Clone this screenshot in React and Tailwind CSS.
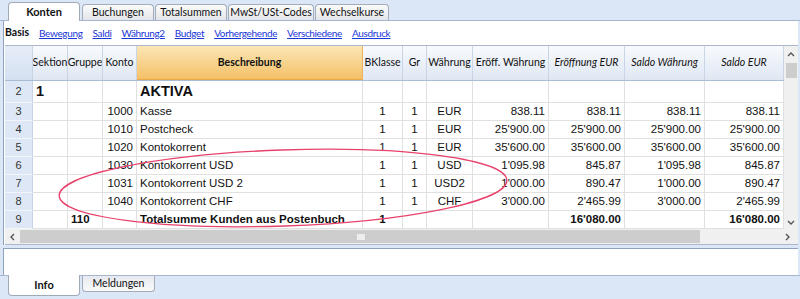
import React from "react";

const ui = { fontFamily: "Lato, 'Noto Sans', sans-serif" };
const data = { fontFamily: "'Liberation Sans', Arial, sans-serif" };

const cols = [
  { key: "sek", label: "Sektion", w: "w-[35px]", align: "left" },
  { key: "gru", label: "Gruppe", w: "w-[35px]", align: "left" },
  { key: "kon", label: "Konto", w: "w-[34px]", align: "right" },
  { key: "bes", label: "Beschreibung", w: "w-[226px]", align: "left" },
  { key: "bk", label: "BKlasse", w: "w-[40px]", align: "center" },
  { key: "gr", label: "Gr", w: "w-[24px]", align: "center" },
  { key: "wa", label: "Währung", w: "w-[46px]", align: "center" },
  { key: "ew", label: "Eröff. Währung", w: "w-[76px]", align: "right" },
  { key: "ee", label: "Eröffnung EUR", w: "w-[76px]", align: "right", it: true },
  { key: "sw", label: "Saldo Währung", w: "w-[80px]", align: "right", it: true },
  { key: "se", label: "Saldo EUR", w: "w-[79px]", align: "right", it: true },
];

const rows = [
  { n: 2, big: true, sek: "1", bes: "AKTIVA" },
  { n: 3, kon: "1000", bes: "Kasse", bk: "1", gr: "1", wa: "EUR", ew: "838.11", ee: "838.11", sw: "838.11", se: "838.11" },
  { n: 4, kon: "1010", bes: "Postcheck", bk: "1", gr: "1", wa: "EUR", ew: "25'900.00", ee: "25'900.00", sw: "25'900.00", se: "25'900.00" },
  { n: 5, kon: "1020", bes: "Kontokorrent", bk: "1", gr: "1", wa: "EUR", ew: "35'600.00", ee: "35'600.00", sw: "35'600.00", se: "35'600.00" },
  { n: 6, kon: "1030", bes: "Kontokorrent USD", bk: "1", gr: "1", wa: "USD", ew: "1'095.98", ee: "845.87", sw: "1'095.98", se: "845.87" },
  { n: 7, kon: "1031", bes: "Kontokorrent USD 2", bk: "1", gr: "1", wa: "USD2", ew: "1'000.00", ee: "890.47", sw: "1'000.00", se: "890.47" },
  { n: 8, kon: "1040", bes: "Kontokorrent CHF", bk: "1", gr: "1", wa: "CHF", ew: "3'000.00", ee: "2'465.99", sw: "3'000.00", se: "2'465.99" },
  { n: 9, bold: true, gru: "110", bes: "Totalsumme Kunden aus Postenbuch", bk: "1", ee: "16'080.00", se: "16'080.00" },
];

const topTabs = [
  { t: "Konten", w: "w-[72px]" },
  { t: "Buchungen", w: "w-[72px]" },
  { t: "Totalsummen", w: "w-[72px]" },
  { t: "MwSt/USt-Codes", w: "w-[86px]" },
  { t: "Wechselkurse", w: "w-[74px]" },
];
const links = ["Bewegung", "Saldi", "Währung2", "Budget", "Vorhergehende", "Verschiedene", "Ausdruck"];

function Chevron({ dir }) {
  const d = {
    up: "M2 6 L5 3 L8 6",
    down: "M2 4 L5 7 L8 4",
    left: "M6 2 L3 5 L6 8",
    right: "M4 2 L7 5 L4 8",
  }[dir];
  return (
    <svg width="10" height="10" viewBox="0 0 10 10">
      <path d={d} fill="none" stroke="#555" strokeWidth="1.4" />
    </svg>
  );
}

const alignCls = { left: " justify-start", right: " justify-end", center: " justify-center" };

export default function App() {
  return (
    <div className="w-[800px] h-[299px] bg-[#dbe6f7] overflow-hidden text-[#111]" style={ui}>
      {/* top tabs */}
      <div className="h-[21px] flex items-end pl-[8px] border-b border-[#a7b6cc]">
        {topTabs.map((t, i) => (
          <div
            key={t.t}
            className={
              "whitespace-nowrap flex items-center justify-center rounded-t-[4px] border border-b-0 " +
              t.w +
              (i === 0
                ? " h-[19px] mr-[2px] -mb-px bg-white border-[#9fa9b8] text-[11px] font-bold"
                : " h-[16px] mr-[1px] bg-gradient-to-b from-[#fbfbfb] to-[#e3e6ea] border-[#a3acb8] text-[10.5px]")
            }
          >
            {t.t}
          </div>
        ))}
      </div>

      {/* main panel */}
      <div className="ml-[3px] mr-[2px] bg-white border-l border-[#8fa3bf]">
        <div className="h-[24px] flex items-center text-[10px] tracking-[-0.35px] pl-[1px] whitespace-nowrap">
          <span className="font-bold mr-[10px] text-[10.5px] tracking-normal">Basis</span>
          {links.map((l) => (
            <span key={l} className="text-[#1a35d8] underline mr-[10px]">
              {l}
            </span>
          ))}
        </div>

        {/* grid */}
        <div className="relative border-t border-b border-[#a9b8cc] ml-px">
          <div className="flex">
            <div>
              {/* header */}
              <div className="flex h-[35px] border-b border-[#a9bcd4]">
                <div className="w-[28px] bg-gradient-to-b from-[#e6edf8] to-[#d4e0f1] border-r border-[#c7d4e6]" />
                {cols.map((c) => (
                  <div
                    key={c.key}
                    className={
                      "flex items-center justify-center text-[10.5px] whitespace-nowrap overflow-hidden border-r " +
                      c.w +
                      (c.key === "bes"
                        ? " bg-gradient-to-b from-[#fbe6b4] to-[#f4c066] border-[#ecb35c] font-bold border-b border-b-[#eca845]"
                        : " bg-gradient-to-b from-[#f8fafd] to-[#dfe7f3] border-[#c9d5e5]") +
                      (c.it ? " italic" : "")
                    }
                  >
                    {c.label}
                  </div>
                ))}
              </div>
              {/* rows */}
              {rows.map((r) => (
                <div
                  key={r.n}
                  className={"flex border-b border-[#e0e0e0] " + (r.big ? "h-[22px]" : "h-[18px]")}
                  style={data}
                >
                  <div className="w-[28px] bg-[#dde7f5] border-r border-[#c7d4e6] border-b border-b-[#f2f6fb] -mb-px flex items-center justify-center text-[11px] text-[#333]">
                    {r.n}
                  </div>
                  {cols.map((c) => (
                    <div
                      key={c.key}
                      className={
                        "flex items-center whitespace-nowrap overflow-hidden px-[3px] border-r border-[#e0e0e0] " +
                        c.w +
                        alignCls[c.align] +
                        (r.big ? " text-[14.5px] font-bold" : " text-[11.5px]") +
                        (r.bold ? " font-bold" : "")
                      }
                    >
                      {r[c.key] || ""}
                    </div>
                  ))}
                </div>
              ))}
            </div>
            {/* vertical scrollbar */}
            <div className="w-[14px] bg-[#f0f0f0] flex flex-col items-center">
              <div className="h-[14px] flex items-center justify-center mt-[2px]">
                <Chevron dir="up" />
              </div>
              <div className="w-[11px] h-[15px] bg-[#cdcdcd] mt-[1px]" />
              <div className="flex-1" />
              <div className="h-[14px] flex items-center justify-center">
                <Chevron dir="down" />
              </div>
            </div>
          </div>
          {/* horizontal scrollbar */}
          <div className="flex h-[15px] bg-[#f0f0f0] items-center">
            <div className="w-[15px] flex justify-center">
              <Chevron dir="left" />
            </div>
            <div className="w-[680px] h-[13px] bg-[#cdcdcd] flex items-center justify-center">
              <div className="w-[8px] h-[6px] bg-[#eeeeee] ml-[1px]" />
            </div>
            <div className="flex-1" />
            <div className="w-[15px] flex justify-center mr-[4px]">
              <Chevron dir="right" />
            </div>
          </div>

          {/* annotation ellipse */}
          <svg className="absolute left-0 top-0 pointer-events-none" width="795" height="200" style={{ overflow: "visible" }}>
            <ellipse
              cx="278"
              cy="142"
              rx="224"
              ry="38"
              transform="rotate(-2 278 142)"
              fill="none"
              stroke="#e8426b"
              strokeWidth="1.3"
            />
          </svg>
        </div>
      </div>

      {/* info panel */}
      <div className="ml-[3px] mr-[2px] mt-[3px] h-[27px] bg-white border-l border-t border-[#8fa3bf]" />

      {/* bottom tabs */}
      <div className="flex items-start pl-[8px] border-t border-[#a7b6cc]">
        <div className="w-[72px] h-[21px] -mt-px bg-white border border-t-0 border-[#9fa9b8] rounded-b-[4px] text-[11px] font-bold flex items-center justify-center">
          Info
        </div>
        <div className="w-[73px] h-[16px] ml-[2px] bg-gradient-to-b from-[#e6e9ee] to-[#fafafa] border border-t-0 border-[#a3acb8] rounded-b-[4px] text-[10.5px] flex items-center justify-center">
          Meldungen
        </div>
      </div>
    </div>
  );
}
